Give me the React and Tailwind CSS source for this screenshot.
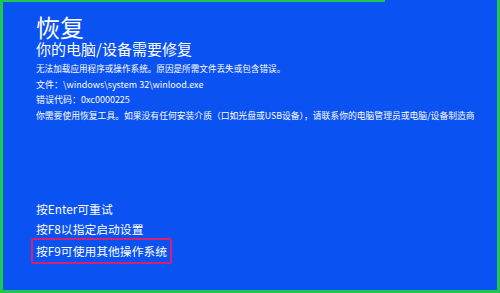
export default function App() {
  const font = { fontFamily: '"Noto Sans CJK SC", "Noto Sans", sans-serif' };
  return (
    <div className="w-[500px] h-[293px] flex flex-col bg-[#0b52f2] overflow-hidden" style={font}>
      <div className="flex h-[2px] shrink-0">
        <div className="w-[385px] bg-[#1ec850]" />
        <div className="flex-1 bg-[#0b52f2]" />
        <div className="w-[3px] bg-[#1ec850]" />
      </div>
      <div className="flex-1 flex border-l-[3px] border-r-[3px] border-b-[3px] border-[#1ec850] text-white">
        <div className="flex flex-col pl-[33px] pt-[13px]">
          <div className="text-[24px] leading-[24px] h-[24px]">恢复</div>
          <div className="mt-[2px] text-[15px] leading-[16px] h-[16px]">你的电脑/设备需要修复</div>
          <div className="mt-[4px] leading-[15.5px] whitespace-nowrap">
            <div className="text-[8.6px]">无法加载应用程序或操作系统。原因是所需文件丢失或包含错误。</div>
            <div className="text-[9px]">文件：\windows\system 32\winlood.exe</div>
            <div className="text-[9px]">错误代码：0xc0000225</div>
            <div className="text-[8.8px]">你需要使用恢复工具。如果没有任何安装介质（口如光盘或USB设备），请联系你的电脑管理员或电脑/设备制造商</div>
          </div>
          <div className="mt-[76px] flex flex-col text-[11.8px] whitespace-nowrap">
            <div className="leading-[20px] h-[20px]">按Enter可重试</div>
            <div className="leading-[19px] h-[19px]">按F8以指定启动设置</div>
            <div className="w-fit -ml-[5px] border-2 border-[#d61f75] rounded-[2px] pl-[3px] pr-[3px] py-[1px] leading-[20px]">按F9可使用其他操作系统</div>
          </div>
        </div>
      </div>
    </div>
  );
}
